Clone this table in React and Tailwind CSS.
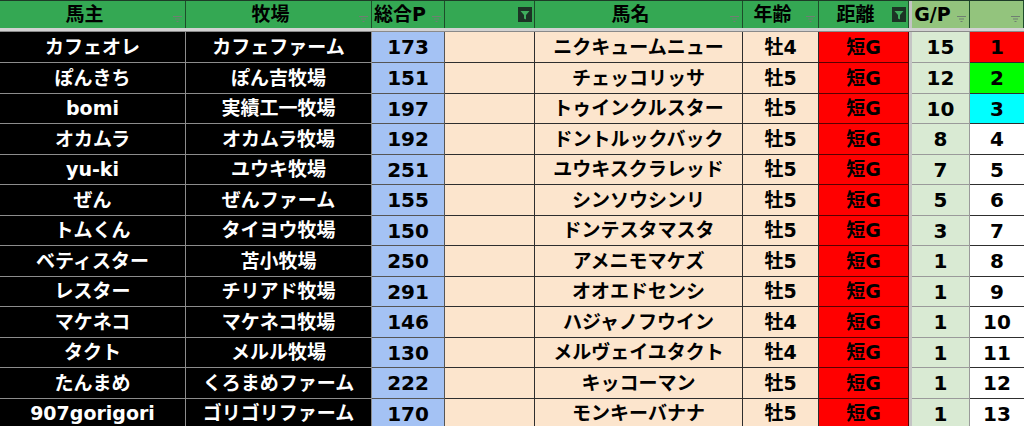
const rows = [
  ["カフェオレ", "カフェファーム", "173", "ニクキュームニュー", "牡4", "15", "1"],
  ["ぽんきち", "ぽん吉牧場", "151", "チェッコリッサ", "牡5", "12", "2"],
  ["bomi", "実績工一牧場", "197", "トゥインクルスター", "牡5", "10", "3"],
  ["オカムラ", "オカムラ牧場", "192", "ドントルックバック", "牡5", "8", "4"],
  ["yu-ki", "ユウキ牧場", "251", "ユウキスクラレッド", "牡5", "7", "5"],
  ["ぜん", "ぜんファーム", "155", "シンソウシンリ", "牡5", "5", "6"],
  ["トムくん", "タイヨウ牧場", "150", "ドンテスタマスタ", "牡5", "3", "7"],
  ["ベティスター", "苫小牧場", "250", "アメニモマケズ", "牡5", "1", "8"],
  ["レスター", "チリアド牧場", "291", "オオエドセンシ", "牡5", "1", "9"],
  ["マケネコ", "マケネコ牧場", "146", "ハジャノフウイン", "牡4", "1", "10"],
  ["タクト", "メルル牧場", "130", "メルヴェイユタクト", "牡4", "1", "11"],
  ["たんまめ", "くろまめファーム", "222", "キッコーマン", "牡5", "1", "12"],
  ["907gorigori", "ゴリゴリファーム", "170", "モンキーバナナ", "牡5", "1", "13"],
]

const rowHeights = ["h-[31px]", "h-[31px]", "h-[30px]", "h-[31px]", "h-[30px]", "h-[31px]", "h-[30px]", "h-[31px]", "h-[30px]", "h-[31px]", "h-[30px]", "h-[31px]", "h-[30px]"]

const rankColors = ["bg-[#ff0000]", "bg-[#00ff00]", "bg-[#00ffff]"]

const FilterLines = () => (
  <svg width="9" height="6" viewBox="0 0 9 6">
    <rect x="0" y="0" width="9" height="1" fill="#6f7f72" />
    <rect x="2" y="2.5" width="5" height="1" fill="#6f7f72" />
    <rect x="3.5" y="5" width="2" height="1" fill="#6f7f72" />
  </svg>
)

const FilterActive = () => (
  <div className="w-[14px] h-[15px] bg-[#1c3325] flex items-center justify-center">
    <svg width="10" height="10" viewBox="0 0 10 10">
      <path d="M0.5 1 H9.5 L6 5 V9.5 L4 8.5 V5 Z" fill="#3fae5d" />
    </svg>
  </div>
)

const HeadCell = ({ label, w, bg, active }) => (
  <div className={`${w} ${bg} h-full flex border-r border-[#1d4d2a]`}>
    <div className="flex-1 flex items-center justify-center">{label}</div>
    <div className={`w-[16px] h-full flex justify-center ${active ? "items-center pr-[2px]" : "items-end pb-[6px]"}`}>
      {active ? <FilterActive /> : <FilterLines />}
    </div>
  </div>
)

const Sep = () => <div className="w-[3px] h-full bg-[#c4c4c4]" />

export default function App() {
  return (
    <div
      className="w-[1024px] h-[426px] overflow-hidden bg-white font-bold text-[19px] text-black"
      style={{ fontFamily: '"DejaVu Sans", "Noto Sans CJK JP", sans-serif' }}
    >
      <div className="flex h-[28px] border-t border-[#1d3b27]">
        <HeadCell label="馬主" w="w-[186px]" bg="bg-[#34a853]" />
        <HeadCell label="牧場" w="w-[186px]" bg="bg-[#34a853]" />
        <HeadCell label="総合P" w="w-[73px]" bg="bg-[#34a853]" />
        <HeadCell label="" w="w-[90px]" bg="bg-[#34a853]" active />
        <HeadCell label="馬名" w="w-[208px]" bg="bg-[#34a853]" />
        <HeadCell label="年齢" w="w-[76px]" bg="bg-[#34a853]" />
        <HeadCell label="距離" w="w-[90px]" bg="bg-[#34a853]" active />
        <Sep />
        <HeadCell label="G/P" w="w-[58px]" bg="bg-[#93c47d]" />
        <HeadCell label="" w="w-[54px]" bg="bg-[#93c47d]" />
      </div>
      <div className="h-[4px] bg-[#d2d2d2] border-b border-[#8a8a8a]" />
      {rows.map((r, i) => (
        <div key={i} className={`flex ${rowHeights[i]}`}>
          <div className="w-[186px] h-full flex items-center justify-center bg-black text-white border-r border-b border-[#8c8c8c]">{r[0]}</div>
          <div className="w-[186px] h-full flex items-center justify-center bg-black text-white border-r border-b border-[#8c8c8c]">{r[1]}</div>
          <div className="w-[73px] h-full flex items-center justify-center bg-[#a4c2f4] text-[20px] border-r border-b border-[#555555]">{r[2]}</div>
          <div className="w-[90px] h-full bg-[#fce5cd] border-r border-b border-[#2e2e2e]" />
          <div className="w-[208px] h-full flex items-center justify-center bg-[#fce5cd] border-r border-b border-[#2e2e2e]">{r[3]}</div>
          <div className="w-[76px] h-full flex items-center justify-center bg-[#fce5cd] border-r border-b border-[#2e2e2e]">{r[4]}</div>
          <div className="w-[90px] h-full flex items-center justify-center bg-[#ff0000] border-r border-b border-[#5a0000]">短G</div>
          <Sep />
          <div className="w-[58px] h-full flex items-center justify-center bg-[#d9ead3] text-[20px] border-r border-b border-[#9a9a9a]">{r[5]}</div>
          <div className={`w-[54px] h-full flex items-center justify-center text-[20px] border-b border-[#2e2e2e] ${rankColors[i] || "bg-white"}`}>{r[6]}</div>
        </div>
      ))}
    </div>
  )
}
